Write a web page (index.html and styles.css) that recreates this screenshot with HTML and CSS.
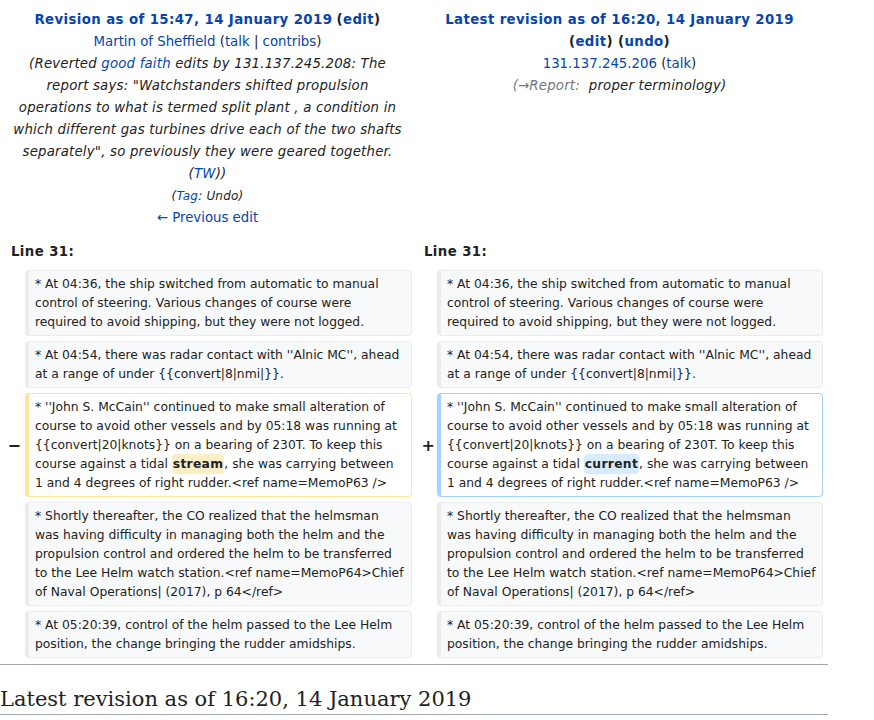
FILE: index.html
```html
<!DOCTYPE html>
<html lang="en">
<head>
<meta charset="utf-8">
<title>Diff</title>
<link rel="stylesheet" href="styles.css">
</head>
<body>
<div class="page">
  <div class="diff">
    <div class="title otitle">
      <div class="rev-line"><a href="#" class="strong">Revision as of 15:47, 14 January 2019</a> <span class="strong">(<a href="#">edit</a>)</span></div>
      <div><a href="#">Martin of Sheffield</a> (<a href="#">talk</a> | <a href="#">contribs</a>)</div>
      <div class="comment">(Reverted <a href="#">good faith</a> edits by 131.137.245.208: The report says: "Watchstanders shifted propulsion operations to what is termed split plant , a condition in which different gas turbines drive each of the two shafts separately", so previously they were geared together. (<a href="#">TW</a>))</div>
      <div class="tags">(<a href="#">Tag</a>: Undo)</div>
      <div><a href="#">← Previous edit</a></div>
    </div>
    <div class="title ntitle">
      <div class="rev-line"><a href="#" class="strong">Latest revision as of 16:20, 14 January 2019</a> <span class="strong">(<a href="#">edit</a>) (<a href="#">undo</a>)</span></div>
      <div><a href="#">131.137.245.206</a> (<a href="#">talk</a>)</div>
      <div class="comment"><span class="autocomment">(→Report: &nbsp;</span>proper terminology)</div>
    </div>

    <div class="lineno">Line 31:</div>
    <div class="lineno">Line 31:</div>

    <div class="marker"></div>
    <div class="line context">* At 04:36, the ship switched from automatic to manual control of steering. Various changes of course were required to avoid shipping, but they were not logged.</div>
    <div class="marker"></div>
    <div class="line context">* At 04:36, the ship switched from automatic to manual control of steering. Various changes of course were required to avoid shipping, but they were not logged.</div>

    <div class="marker"></div>
    <div class="line context">* At 04:54, there was radar contact with ''Alnic MC'', ahead at a range of under {{convert|8|nmi|}}.</div>
    <div class="marker"></div>
    <div class="line context">* At 04:54, there was radar contact with ''Alnic MC'', ahead at a range of under {{convert|8|nmi|}}.</div>

    <div class="marker">−</div>
    <div class="line deleted">* ''John S. McCain'' continued to make small alteration of course to avoid other vessels and by 05:18 was running at {{convert|20|knots}} on a bearing of 230T. To keep this course against a tidal <del class="change">stream</del>, she was carrying between 1 and 4 degrees of right rudder.&lt;ref name=MemoP63 /&gt;</div>
    <div class="marker plus">+</div>
    <div class="line added">* ''John S. McCain'' continued to make small alteration of course to avoid other vessels and by 05:18 was running at {{convert|20|knots}} on a bearing of 230T. To keep this course against a tidal <ins class="change">current</ins>, she was carrying between 1 and 4 degrees of right rudder.&lt;ref name=MemoP63 /&gt;</div>

    <div class="marker"></div>
    <div class="line context">* Shortly thereafter, the CO realized that the helmsman was having difficulty in managing both the helm and the propulsion control and ordered the helm to be transferred to the Lee Helm watch station.&lt;ref name=MemoP64&gt;Chief of Naval Operations| (2017), p 64&lt;/ref&gt;</div>
    <div class="marker"></div>
    <div class="line context">* Shortly thereafter, the CO realized that the helmsman was having difficulty in managing both the helm and the propulsion control and ordered the helm to be transferred to the Lee Helm watch station.&lt;ref name=MemoP64&gt;Chief of Naval Operations| (2017), p 64&lt;/ref&gt;</div>

    <div class="marker"></div>
    <div class="line context">* At 05:20:39, control of the helm passed to the Lee Helm position, the change bringing the rudder amidships.</div>
    <div class="marker"></div>
    <div class="line context">* At 05:20:39, control of the helm passed to the Lee Helm position, the change bringing the rudder amidships.</div>
  </div>
  <hr class="diff-hr">
  <h2 class="current-title">Latest revision as of 16:20, 14 January 2019</h2>
</div>
</body>
</html>
```
FILE: styles.css
```css
html, body {
  margin: 0;
  padding: 0;
  background: #ffffff;
}
body {
  font-family: "DejaVu Sans", sans-serif;
  color: #222222;
}
.page {
  width: 828px;
}
a {
  color: #0645ad;
  text-decoration: none;
}
.diff {
  display: grid;
  grid-template-columns: 18px 387px 17px 386px;
  column-gap: 4px;
  row-gap: 5px;
  padding-left: 3px;
  padding-top: 9px;
}
.title {
  grid-column: span 2;
  text-align: center;
  font-size: 13.3px;
  line-height: 22px;
  padding: 0 9px 7px;
}
.strong {
  font-weight: bold;
  letter-spacing: 0.4px;
}
.comment {
  font-style: italic;
  color: #222222;
  letter-spacing: 0.2px;
}
.autocomment {
  color: #72777d;
}
.tags {
  font-size: 12px;
  font-style: italic;
  letter-spacing: 0.2px;
}
.lineno {
  grid-column: span 2;
  font-weight: bold;
  font-size: 13.3px;
  letter-spacing: 0.4px;
  line-height: 22px;
  padding: 0 0 2px 8px;
}
.marker {
  align-self: center;
  text-align: right;
  font-weight: bold;
  font-size: 16px;
  line-height: 19px;
}
.plus {
  margin-right: -2px;
}
.line {
  font-size: 12.32px;
  line-height: 19px;
  padding: 3.5px 6px;
  border-style: solid;
  border-width: 1px 1px 1px 4px;
  border-radius: 4px;
  overflow-wrap: break-word;
}
.context {
  background: #f8f9fa;
  border-color: #eaecf0;
  color: #222222;
}
.deleted {
  background: #ffffff;
  border-color: #ffe49c;
}
.added {
  background: #ffffff;
  border-color: #a3d3ff;
}
.change {
  font-weight: bold;
  letter-spacing: 0.3px;
  text-decoration: none;
  border-radius: 4px;
  padding: 3px 1px;
}
del.change {
  background: #feeec8;
}
ins.change {
  background: #d8ecff;
}
.diff-hr {
  margin: 6px 0 0;
  border: 0;
  border-top: 1px solid #a2a9b1;
  height: 0;
}
.current-title {
  margin: 21px 0 0;
  font-family: "DejaVu Serif", serif;
  font-weight: normal;
  font-size: 21px;
  line-height: 27px;
  border-bottom: 1px solid #a2a9b1;
  padding-bottom: 1px;
}
```
